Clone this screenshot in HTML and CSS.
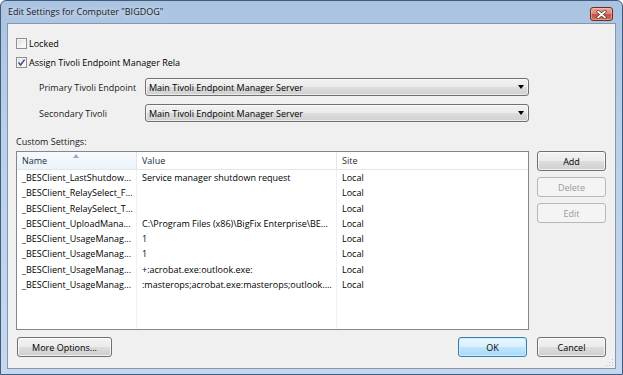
FILE: index.html
```html
<!DOCTYPE html>
<html lang="en">
<head>
    <meta charset="UTF-8">
    <title>Edit Settings for Computer "BIGDOG"</title>
    <link rel="stylesheet" href="styles.css">
</head>
<body>
    <div class="window">
        <div class="titlebar">
            <span class="title">Edit Settings for Computer "BIGDOG"</span>
            <div class="close">
                <svg width="11" height="9" viewBox="0 0 11 9">
                    <path d="M2 1.5 L9 7.5 M9 1.5 L2 7.5" stroke="#5a2a24" stroke-width="3.2" stroke-linecap="round"/>
                    <path d="M2 1.5 L9 7.5 M9 1.5 L2 7.5" stroke="#ffffff" stroke-width="1.8" stroke-linecap="round"/>
                </svg>
            </div>
        </div>

        <div class="client">
            <!-- checkboxes -->
            <div class="check">
                <span class="box"></span>
                <span>Locked</span>
            </div>
            <div class="check check-second">
                <span class="box">
                    <svg width="9" height="9" viewBox="0 0 9 9">
                        <path d="M1.5 4.5 L3.6 7 L7.6 1.6" fill="none" stroke="#3c4f86" stroke-width="1.5"/>
                    </svg>
                </span>
                <span>Assign Tivoli Endpoint Manager Rela</span>
            </div>

            <!-- relays -->
            <div class="field field-first">
                <span class="field-label">Primary Tivoli Endpoint</span>
                <div class="combo">
                    <span>Main Tivoli Endpoint Manager Server</span>
                    <span class="combo-arrow"></span>
                </div>
            </div>
            <div class="field">
                <span class="field-label">Secondary Tivoli</span>
                <div class="combo">
                    <span>Main Tivoli Endpoint Manager Server</span>
                    <span class="combo-arrow"></span>
                </div>
            </div>

            <div class="section-label">Custom Settings:</div>

            <div class="list-area">
                <div class="listview">
                    <div class="lv-head lv-sorted">Name<span class="sort-arrow"></span></div>
                    <div class="lv-head">Value</div>
                    <div class="lv-head lv-last">Site</div>

                    <div class="lv-cell">_BESClient_LastShutdow...</div>
                    <div class="lv-cell">Service manager shutdown request</div>
                    <div class="lv-cell lv-last">Local</div>

                    <div class="lv-cell">_BESClient_RelaySelect_F...</div>
                    <div class="lv-cell"></div>
                    <div class="lv-cell lv-last">Local</div>

                    <div class="lv-cell">_BESClient_RelaySelect_T...</div>
                    <div class="lv-cell"></div>
                    <div class="lv-cell lv-last">Local</div>

                    <div class="lv-cell">_BESClient_UploadMana...</div>
                    <div class="lv-cell">C:\Program Files (x86)\BigFix Enterprise\BE...</div>
                    <div class="lv-cell lv-last">Local</div>

                    <div class="lv-cell">_BESClient_UsageManag...</div>
                    <div class="lv-cell">1</div>
                    <div class="lv-cell lv-last">Local</div>

                    <div class="lv-cell">_BESClient_UsageManag...</div>
                    <div class="lv-cell">1</div>
                    <div class="lv-cell lv-last">Local</div>

                    <div class="lv-cell">_BESClient_UsageManag...</div>
                    <div class="lv-cell">+:acrobat.exe:outlook.exe:</div>
                    <div class="lv-cell lv-last">Local</div>

                    <div class="lv-cell">_BESClient_UsageManag...</div>
                    <div class="lv-cell">:masterops;acrobat.exe:masterops;outlook....</div>
                    <div class="lv-cell lv-last">Local</div>

                    <div class="lv-cell"></div>
                    <div class="lv-cell"></div>
                    <div class="lv-cell lv-last"></div>
                </div>

                <div class="side-buttons">
                    <button class="btn">Add</button>
                    <button class="btn" disabled>Delete</button>
                    <button class="btn" disabled>Edit</button>
                </div>
            </div>

            <div class="footer">
                <button class="btn btn-wide">More Options...</button>
                <div class="footer-right">
                    <button class="btn btn-default">OK</button>
                    <button class="btn">Cancel</button>
                </div>
            </div>

            <div class="grip">
                <svg width="8" height="8" viewBox="0 0 8 8">
                    <g fill="#b8bcc2">
                        <rect x="6" y="0" width="1" height="1"/>
                        <rect x="3" y="3" width="1" height="1"/>
                        <rect x="6" y="3" width="1" height="1"/>
                        <rect x="0" y="6" width="1" height="1"/>
                        <rect x="3" y="6" width="1" height="1"/>
                        <rect x="6" y="6" width="1" height="1"/>
                    </g>
                </svg>
            </div>
        </div>
    </div>
</body>
</html>
```

FILE: styles.css
```css
* {
    margin: 0;
    padding: 0;
    box-sizing: border-box;
}

body {
    width: 623px;
    height: 375px;
    overflow: hidden;
    font-family: "Open Sans", "Noto Sans", sans-serif;
    font-size: 9px;
    color: #000;
    background: #fff;
}

/* window frame */
.window {
    width: 623px;
    height: 375px;
    display: flex;
    flex-direction: column;
    background: linear-gradient(to bottom, #aac3e1 0%, #bad0ea 35%, #c5d8ee 100%);
    border: 1px solid #3d5c7e;
    border-radius: 6px 6px 0 0;
    padding: 0 6px 5px 6px;
}

.titlebar {
    height: 22px;
    display: flex;
    align-items: flex-start;
    justify-content: space-between;
    padding-left: 1px;
}

.title {
    line-height: 22px;
    color: #1a1a1a;
    text-shadow: 0 0 6px rgba(255, 255, 255, 0.9);
}

.close {
    width: 23px;
    height: 14px;
    margin-top: 6px;
    margin-right: 3px;
    border: 1px solid #6b2c26;
    border-radius: 3px;
    background: linear-gradient(to bottom, #e9a795 0%, #dd8a78 45%, #c8503f 55%, #d0705a 100%);
    box-shadow: inset 0 0 0 1px rgba(255, 210, 200, 0.45);
    display: flex;
    align-items: center;
    justify-content: center;
}

.client {
    position: relative;
    flex: 1;
    display: flex;
    flex-direction: column;
    background: #f0f0f0;
    border: 1px solid #8497ae;
    padding: 12px 9px 11px 8px;
}

/* checkboxes */
.check {
    height: 14px;
    display: flex;
    align-items: center;
    gap: 2px;
}

.check-second {
    margin-top: 5px;
}

.box {
    width: 11px;
    height: 11px;
    border: 1px solid #8e8f8f;
    background: linear-gradient(135deg, #dcdcdc 0%, #f4f4f4 60%, #ffffff 100%);
    box-shadow: inset 0 0 0 1px #f4f4f4;
    display: flex;
    align-items: center;
    justify-content: center;
}

/* combo rows */
.field {
    height: 18px;
    display: flex;
    align-items: center;
    padding-left: 23px;
    margin-top: 8px;
}

.field-first {
    margin-top: 9px;
}

.field-label {
    width: 106px;
    color: #1a1a1a;
}

.combo {
    width: 384px;
    height: 18px;
    display: flex;
    align-items: center;
    justify-content: space-between;
    padding: 0 4px 0 3px;
    border: 1px solid #707070;
    border-radius: 3px;
    background: linear-gradient(to bottom, #f2f2f2 0%, #ebebeb 50%, #dddddd 51%, #cfcfcf 100%);
    box-shadow: inset 0 0 0 1px rgba(255, 255, 255, 0.6);
}

.combo-arrow {
    width: 0;
    height: 0;
    border-left: 3.5px solid transparent;
    border-right: 3.5px solid transparent;
    border-top: 4px solid #000;
}

.section-label {
    height: 14px;
    line-height: 14px;
    margin-top: 13px;
    color: #1a1a1a;
}

/* list + side buttons */
.list-area {
    flex: 1;
    display: flex;
    gap: 8px;
    margin-top: 2px;
}

.listview {
    width: 513px;
    display: grid;
    grid-template-columns: 120px 200px 1fr;
    grid-template-rows: 18px repeat(8, 15.3px) 1fr;
    border: 1px solid #828790;
    background: #fff;
}

.lv-head {
    position: relative;
    line-height: 17px;
    padding-left: 5px;
    color: #1e2b3c;
    border-right: 1px solid #e5e5e5;
    border-bottom: 1px solid #e5e5e5;
}

.lv-sorted {
    background: linear-gradient(to bottom, #f6fafd 0%, #eaf3fb 100%);
}

.sort-arrow {
    position: absolute;
    top: 2px;
    left: 56px;
    width: 0;
    height: 0;
    border-left: 3.5px solid transparent;
    border-right: 3.5px solid transparent;
    border-bottom: 4px solid #9aaabd;
}

.lv-cell {
    line-height: 15.3px;
    padding-left: 5px;
    white-space: nowrap;
    overflow: hidden;
    border-right: 1px solid #f0f0f0;
}

.lv-last {
    border-right: none;
}

.side-buttons {
    display: flex;
    flex-direction: column;
    gap: 6px;
}

/* buttons */
.btn {
    width: 69px;
    height: 20px;
    font-family: inherit;
    font-size: 9px;
    color: #000;
    border: 1px solid #707070;
    border-radius: 3px;
    background: linear-gradient(to bottom, #f2f2f2 0%, #ebebeb 50%, #dddddd 51%, #cfcfcf 100%);
    box-shadow: inset 0 0 0 1px rgba(255, 255, 255, 0.7);
}

.btn:disabled {
    color: #9a9a9a;
    border-color: #b5b9bd;
    background: #f4f4f4;
    box-shadow: none;
}

.btn-default {
    border-color: #3c7fb1;
    background: linear-gradient(to bottom, #eaf6fd 0%, #d9f0fc 50%, #bee6fd 51%, #a7d9f5 100%);
    box-shadow: inset 0 0 0 1px #c8ecfc;
}

.btn-wide {
    width: 95px;
}

.footer {
    height: 20px;
    margin-top: 7px;
    display: flex;
    justify-content: space-between;
    padding-left: 1px;
}

.footer-right {
    display: flex;
    gap: 10px;
}

.grip {
    position: absolute;
    right: 1px;
    bottom: 1px;
    line-height: 0;
}
```
